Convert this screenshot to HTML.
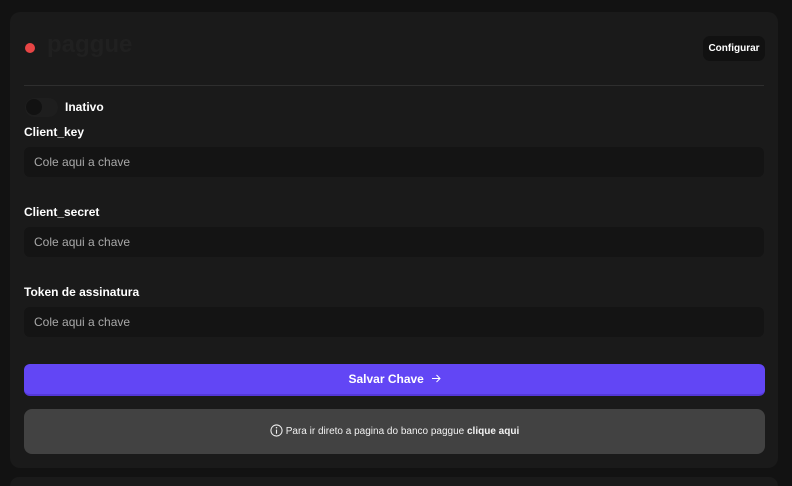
<!DOCTYPE html>
<html><head><style>
*{box-sizing:border-box;margin:0;padding:0}
html,body{width:792px;height:486px;overflow:hidden}
body{background:#121212;font-family:"Liberation Sans",sans-serif;position:relative;color:#fff}
.card{position:absolute;left:10px;top:12px;width:768px;height:456px;background:#1a1a1a;border-radius:10px}
.card2{position:absolute;left:10px;top:477px;width:768px;height:9px;background:#1a1a1a;border-radius:10px 10px 0 0}
.abs{position:absolute}
.lbl{position:absolute;left:24px;font-size:12px;font-weight:bold;color:#fff}
.inp{position:absolute;left:24px;width:740px;height:30px;background:#141414;border-radius:6px;font-size:12px;color:#a8a8a8;padding-left:10px;line-height:30px}
</style></head><body>
<div class="card"></div>
<div class="card2"></div>
<div class="abs" style="left:25px;top:43px;width:10px;height:10px;border-radius:50%;background:#e84545"></div>
<div class="abs" style="left:47px;top:31px;font-size:24px;font-weight:bold;color:#202020;letter-spacing:0px">paggue</div>
<div class="abs" style="left:703px;top:36px;width:62px;height:25px;background:#111;border-radius:7px;font-size:10px;font-weight:bold;text-align:center;line-height:25px">Configurar</div>
<div class="abs" style="left:24px;top:85px;width:740px;height:1px;background:#2e2e2e"></div>
<div class="abs" style="left:25px;top:98px;width:33px;height:19px;border-radius:10px;background:#1e1e1e"></div>
<div class="abs" style="left:26px;top:99px;width:16px;height:16px;border-radius:50%;background:#121212"></div>
<div class="abs" style="left:65px;top:100px;font-size:12px;font-weight:bold">Inativo</div>
<div class="lbl" style="top:125px">Client_key</div>
<div class="inp" style="top:147px">Cole aqui a chave</div>
<div class="lbl" style="top:205px">Client_secret</div>
<div class="inp" style="top:227px">Cole aqui a chave</div>
<div class="lbl" style="top:285px">Token de assinatura</div>
<div class="inp" style="top:307px">Cole aqui a chave</div>
<div class="abs" style="left:24px;top:364px;width:741px;height:32px;background:#6246f5;border-radius:6px;border-bottom:2px solid #5438d8;text-align:center;line-height:31px;font-size:12px;font-weight:bold">Salvar Chave &nbsp;<svg width="10" height="9" viewBox="0 0 10 9" style="vertical-align:0px"><path d="M1 4.5H9M5.5 1L9 4.5L5.5 8" fill="none" stroke="#fff" stroke-width="1"/></svg></div>
<div class="abs" style="left:24px;top:409px;width:741px;height:45px;background:#424242;border-radius:8px;text-align:center;line-height:45px;font-size:10px;color:#f2f2f2">
<svg width="13" height="13" viewBox="0 0 14 14" style="vertical-align:-3px;margin-right:3px"><circle cx="7" cy="7" r="6" fill="none" stroke="#eee" stroke-width="1.1"/><line x1="7" y1="6" x2="7" y2="10.5" stroke="#eee" stroke-width="1.2"/><circle cx="7" cy="4" r=".8" fill="#eee"/></svg>Para ir direto a pagina do banco paggue <b>clique aqui</b></div>
</body></html>
